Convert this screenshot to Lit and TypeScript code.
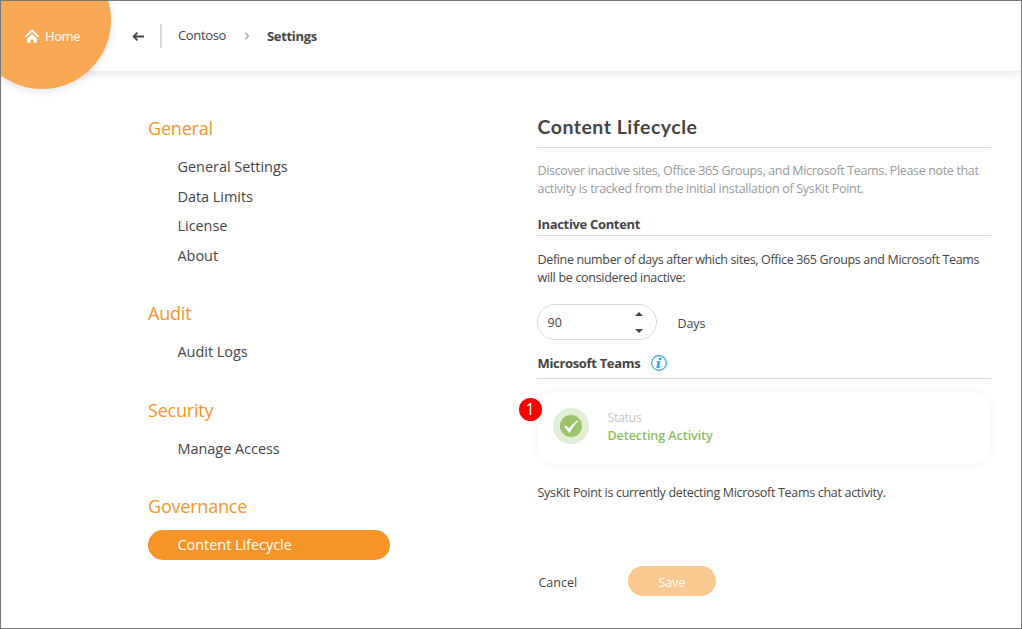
import { LitElement, html, css } from "lit";
import { customElement, property, state } from "lit/decorators.js";
import { classMap } from "lit/directives/class-map.js";

interface NavGroup {
  title: string;
  items: string[];
}

const NAV: NavGroup[] = [
  { title: "General", items: ["General Settings", "Data Limits", "License", "About"] },
  { title: "Audit", items: ["Audit Logs"] },
  { title: "Security", items: ["Manage Access"] },
  { title: "Governance", items: ["Content Lifecycle"] },
];

@customElement("page-header")
class PageHeader extends LitElement {
  static styles = css`
    :host {
      display: block;
      flex: none;
      position: relative;
      height: 70px;
      background: #fff;
      box-shadow: 0 3px 8px rgba(0, 0, 0, 0.1);
    }
    .disc {
      position: absolute;
      left: -28px;
      top: -50px;
      width: 138px;
      height: 138px;
      border-radius: 50%;
      background: #f9a953;
      box-shadow: 0 2px 8px rgba(0, 0, 0, 0.12);
    }
    .bar {
      position: relative;
      display: flex;
      align-items: center;
      height: 70px;
      padding-left: 24px;
      font-size: 13px;
      color: #444;
    }
    .home {
      display: flex;
      align-items: center;
      gap: 6px;
      width: 107px;
      color: #fff;
    }
    .home span {
      letter-spacing: -0.4px;
    }
    .back {
      width: 28px;
      display: flex;
    }
    .crumbs {
      display: flex;
      align-items: center;
      height: 24px;
      border-left: 2px solid #d9d9d9;
      padding-left: 16px;
    }
    .parent {
      width: 66px;
      padding-bottom: 2px;
      letter-spacing: -0.35px;
    }
    .chevron {
      width: 23px;
      display: flex;
    }
    .current {
      font-weight: 700;
      letter-spacing: -0.33px;
    }
    svg {
      display: block;
    }
  `;
  render() {
    return html`
      <div class="disc"></div>
      <div class="bar">
        <div class="home">
          <svg width="14" height="14" viewBox="0 0 14 14">
            <path d="M.9 7.4 7 1.5l6.1 5.9" fill="none" stroke="#fff" stroke-width="1.9" stroke-linecap="round" stroke-linejoin="round" />
            <path d="M7 5l5 4.7v3a1 1 0 0 1-1 1H8.4v-3.2H5.6v3.2H3a1 1 0 0 1-1-1v-3z" fill="#fff" />
          </svg>
          <span>Home</span>
        </div>
        <div class="back">
          <svg width="13" height="11" viewBox="0 0 13 11">
            <path d="M12 5.500H2M5.400 1.600 1.600 5.500l3.800 3.900" fill="none" stroke="#444" stroke-width="1.800" />
          </svg>
        </div>
        <div class="crumbs">
          <span class="parent">Contoso</span>
          <span class="chevron">
            <svg width="6" height="8" viewBox="0 0 6 8">
              <path d="M1.200.8 4.400 4 1.200 7.200" fill="none" stroke="#b0b0b0" stroke-width="1.600" />
            </svg>
          </span>
          <span class="current">Settings</span>
        </div>
      </div>
    `;
  }
}

@customElement("side-nav")
class SideNav extends LitElement {
  @property() active = "";
  static styles = css`
    :host {
      display: block;
      width: 242px;
      flex: none;
    }
    .group {
      margin-bottom: 28.8px;
    }
    .title {
      font-size: 18px;
      line-height: 28px;
      margin-bottom: 10px;
      color: #f79428;
      letter-spacing: -0.2px;
    }
    .item {
      font-size: 14.5px;
      line-height: 29.6px;
      padding-left: 29.5px;
      border-radius: 15px;
      color: #444;
      letter-spacing: -0.05px;
      cursor: pointer;
    }
    .item.active {
      background: #f79428;
      color: #fff;
      line-height: 30px;
    }
  `;
  render() {
    return NAV.map(
      (g) => html`<div class="group">
        <div class="title">${g.title}</div>
        ${g.items.map((i) => html`<div class=${classMap({ item: true, active: i === this.active })}>${i}</div>`)}
      </div>`
    );
  }
}

@customElement("lifecycle-settings")
class LifecycleSettings extends LitElement {
  @state() private days = 90;
  static styles = css`
    :host {
      display: block;
      width: 454px;
      font-size: 12.5px;
      line-height: 18px;
      color: #444;
    }
    h1 {
      margin: 0;
      height: 37px;
      padding: 1px 0 2px 0.5px;
      box-sizing: border-box;
      font: 700 19.5px/30px Lato, sans-serif;
      border-bottom: 1px solid #d9d9d9;
      letter-spacing: 0.5px;
    }
    h2 {
      margin: 0;
      padding-left: 0.5px;
      box-sizing: content-box;
      font-size: 13px;
      font-weight: 700;
      border-bottom: 1px solid #d9d9d9;
      display: flex;
      align-items: center;
      gap: 11px;
      letter-spacing: -0.33px;
    }
    .inactive {
      height: 22px;
      margin-top: 15px;
    }
    .teams {
      height: 27px;
      padding-bottom: 2px;
      margin-top: 9px;
    }
    p {
      margin: 0;
      padding-left: 0.5px;
      white-space: nowrap;
      letter-spacing: -0.3px;
    }
    .full {
      letter-spacing: -0.345px;
    }
    .intro {
      margin-top: 14px;
      color: #999;
    }
    .define {
      margin-top: 15px;
    }
    .days {
      display: flex;
      align-items: center;
      gap: 20.5px;
      margin-top: 17px;
    }
    .unit {
      padding-top: 3px;
      letter-spacing: -0.1px;
    }
    .spinner {
      box-sizing: border-box;
      width: 120px;
      height: 36px;
      border: 1px solid #d9d9d9;
      border-radius: 18px;
      display: flex;
      justify-content: space-between;
      align-items: center;
      padding: 0 13px 0 9.5px;
    }
    .number {
      padding-top: 2px;
    }
    .status {
      position: relative;
      box-sizing: border-box;
      height: 72px;
      margin-top: 13px;
      padding: 0 0 4px 16px;
      border-radius: 18px;
      box-shadow: 0 0 8px rgba(0, 0, 0, 0.06);
      display: flex;
      align-items: center;
      gap: 18.5px;
    }
    .words {
      padding-top: 1px;
    }
    .marker {
      position: absolute;
      left: -18.5px;
      top: 5.5px;
      width: 23px;
      height: 23px;
      border-radius: 50%;
      background: #f00;
      color: #fff;
      font-size: 16px;
      line-height: 23px;
      text-align: center;
    }
    .label {
      color: #c8c8c8;
      letter-spacing: -0.4px;
    }
    .value {
      color: #8ebe5b;
      font-weight: 600;
      letter-spacing: -0.04px;
    }
    .note {
      margin-top: 20px;
      letter-spacing: -0.315px;
    }
    .actions {
      display: flex;
      align-items: center;
      margin-top: 64px;
    }
    .cancel {
      width: 91px;
      box-sizing: border-box;
      padding: 3px 0 0 1.5px;
    }
    .save {
      width: 88px;
      height: 30px;
      box-sizing: border-box;
      padding-top: 2px;
      border-radius: 15px;
      background: #fac891;
      color: #fff;
      text-align: center;
      line-height: 30px;
    }
    svg {
      display: block;
    }
  `;
  render() {
    return html`
      <h1>Content Lifecycle</h1>
      <p class="intro">
        <span class="full">Discover inactive sites, Office 365 Groups, and Microsoft Teams. Please note that</span><br />
        <span>activity is tracked from the initial installation of SysKit Point.</span>
      </p>
      <h2 class="inactive">Inactive Content</h2>
      <p class="define">
        <span class="full">Define number of days after which sites, Office 365 Groups and Microsoft Teams</span><br />
        <span>will be considered inactive:</span>
      </p>
      <div class="days">
        <div class="spinner">
          <span class="number">${this.days}</span>
          <svg width="8" height="22" viewBox="0 0 8 22">
            <path d="M0 5 4 1l4 4zM0 18h8l-4 4z" fill="#444" />
          </svg>
        </div>
        <span class="unit">Days</span>
      </div>
      <h2 class="teams">
        <span>Microsoft Teams</span>
        <svg width="16" height="16" viewBox="0 0 16 16">
          <circle cx="8" cy="8" r="7.4" fill="none" stroke="#2ea3e6" stroke-width="1.1" />
          <circle cx="9.2" cy="3.9" r="1.4" fill="#2ea3e6" />
          <path d="M5.500 6.300h4L8 11.400q-.1.800 1.500-.6l.5.5Q8.200 13.600 6.500 13.300 5.100 13 5.500 11.400L6.600 7.200H5.300z" fill="#2ea3e6" />
        </svg>
      </h2>
      <div class="status">
        <span class="marker">1</span>
        <svg width="36" height="36" viewBox="0 0 36 36">
          <circle cx="18" cy="18" r="18" fill="#e1eed5" />
          <circle cx="18" cy="18" r="11" fill="#9ac36c" />
          <path d="M11.100 18.800l2-1.400 2.900 3.100q3-5 8.600-8.300l.8.800Q19.700 18.500 16.500 25.200z" fill="#fff" />
        </svg>
        <div class="words">
          <div class="label">Status</div>
          <div class="value">Detecting Activity</div>
        </div>
      </div>
      <p class="note">SysKit Point is currently detecting Microsoft Teams chat activity.</p>
      <div class="actions">
        <span class="cancel">Cancel</span>
        <span class="save">Save</span>
      </div>
    `;
  }
}

@customElement("app-root")
class AppRoot extends LitElement {
  static styles = css`
    :host {
      display: flex;
      flex-direction: column;
      box-sizing: border-box;
      width: 1022px;
      height: 629px;
      overflow: hidden;
      border: 1px solid #77777a;
      background: #fff;
      font-family: "Open Sans", "Noto Sans", sans-serif;
    }
    .body {
      display: flex;
      gap: 147px;
      padding: 40px 0 0 147px;
    }
    .nav {
      padding-top: 3px;
    }
  `;
  render() {
    return html`
      <page-header></page-header>
      <div class="body">
        <side-nav class="nav" active="Content Lifecycle"></side-nav>
        <lifecycle-settings></lifecycle-settings>
      </div>
    `;
  }
}
